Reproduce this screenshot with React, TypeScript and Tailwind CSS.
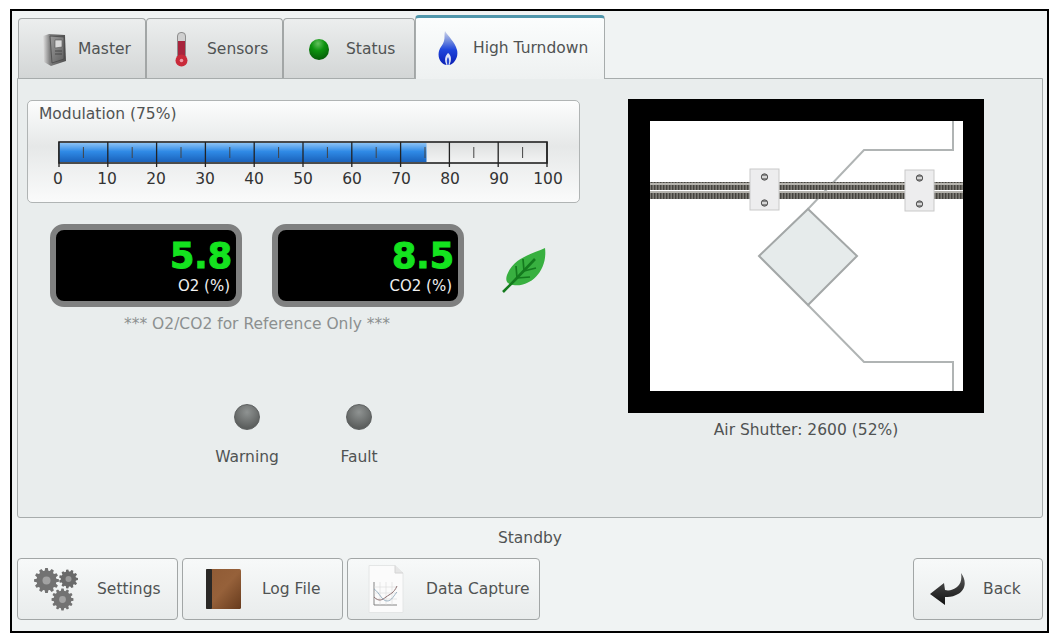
import type { ReactNode } from "react";

// Gear outline, built from centre, radius and tooth count
const gearPath = (cx: number, cy: number, r: number, teeth: number) => {
  const pts: string[] = [];
  const step = (Math.PI * 2) / teeth;
  for (let i = 0; i < teeth; i++) {
    const a = i * step;
    const add = (rad: number, ang: number) =>
      pts.push(`${(cx + rad * Math.cos(ang)).toFixed(2)} ${(cy + rad * Math.sin(ang)).toFixed(2)}`);
    add(r * 0.8, a - step * 0.36);
    add(r, a - step * 0.2);
    add(r, a + step * 0.2);
    add(r * 0.8, a + step * 0.36);
  }
  return `M${pts.join("L")}Z`;
};

const MasterIcon = () => (
  <svg width="24" height="33" viewBox="0 0 24 33">
    <defs>
      <linearGradient id="cab" x1="0" x2="1" y1="0" y2="0">
        <stop offset="0" stopColor="#e2e2e2" />
        <stop offset="0.3" stopColor="#7f7f7f" />
        <stop offset="1" stopColor="#4f4f4f" />
      </linearGradient>
      <linearGradient id="cabFront" x1="0" x2="1" y1="0" y2="1">
        <stop offset="0" stopColor="#9b9b9b" />
        <stop offset="1" stopColor="#5f5f5f" />
      </linearGradient>
    </defs>
    <path d="M1 3 L7 1 L23 2 L24 28 L9 33 L2 29 Z" fill="url(#cab)" />
    <path d="M8 3 L22 4 L22 26 L10 30 Z" fill="url(#cabFront)" stroke="#4a4a4a" strokeWidth="0.8" />
    <path d="M13 7 L20 7 L20 14 L13 15 Z" fill="#d9d9d9" stroke="#555" strokeWidth="0.6" />
    <path d="M13 18 L20 18 M13 21 L20 21" stroke="#444" strokeWidth="0.9" />
  </svg>
);

const ThermometerIcon = () => (
  <svg width="13" height="35" viewBox="0 0 13 35">
    <rect x="2.5" y="0.5" width="8" height="28" rx="3.5" fill="#cfcfcf" stroke="#8d8d8d" />
    <rect x="3" y="9" width="7" height="20" fill="#a8243c" />
    <circle cx="6.5" cy="28.5" r="6" fill="#c92a3a" />
    <circle cx="6.5" cy="28.5" r="1.8" fill="#ee9aa5" />
  </svg>
);

const StatusBall = () => (
  <svg width="20" height="21" viewBox="0 0 20 21">
    <defs>
      <radialGradient id="ball" cx="0.45" cy="0.22" r="0.85">
        <stop offset="0" stopColor="#62c05c" />
        <stop offset="0.4" stopColor="#0d930f" />
        <stop offset="1" stopColor="#045407" />
      </radialGradient>
    </defs>
    <ellipse cx="10" cy="10.5" rx="10" ry="10.5" fill="url(#ball)" />
  </svg>
);

const FlameIcon = () => (
  <svg width="20" height="35" viewBox="0 0 20 35">
    <defs>
      <linearGradient id="flame" x1="0" x2="0" y1="0" y2="1">
        <stop offset="0" stopColor="#cfd5ea" />
        <stop offset="0.3" stopColor="#6e88dd" />
        <stop offset="0.55" stopColor="#1f46dc" />
        <stop offset="1" stopColor="#0a1fb4" />
      </linearGradient>
    </defs>
    <path d="M7 0 C10 5 17 11 19 19 C21 27 15 34 11 34 L9 34 C4 34 -1 28 1 20 C2 16 5 14 6 10 C7 7 6 3 7 0 Z" fill="url(#flame)" />
    <path d="M10 22 C13 24 14 28 11.5 34 L8.5 34 C6 29 7 25 10 22 Z" fill="#dfe5f7" />
    <path d="M10 26 C11.5 28 11.5 31 10.5 34 L9.5 34 C8.5 31 8.5 28 10 26 Z" fill="#2a4bd6" />
  </svg>
);

const GearsIcon = () => (
  <svg width="44" height="44" viewBox="0 0 44 44">
    <path d={gearPath(12.5, 13.5, 12.5, 12)} fill="#727272" />
    <circle cx="12.5" cy="13.5" r="4" fill="#a2a2a2" />
    <path d={gearPath(34.5, 12, 9.5, 11)} fill="#6a6a6a" />
    <circle cx="34.5" cy="12" r="3" fill="#9a9a9a" />
    <path d={gearPath(28.5, 32.5, 11, 12)} fill="#727272" />
    <circle cx="28.5" cy="32.5" r="3.4" fill="#a2a2a2" />
  </svg>
);

const BookIcon = () => (
  <svg width="35" height="40" viewBox="0 0 35 40">
    <defs>
      <linearGradient id="book" x1="0" x2="1" y1="0" y2="1">
        <stop offset="0" stopColor="#8f5a34" />
        <stop offset="0.5" stopColor="#96613a" />
        <stop offset="1" stopColor="#673b1d" />
      </linearGradient>
    </defs>
    <rect x="0" y="0" width="35" height="40" rx="1.5" fill="url(#book)" />
    <rect x="0" y="0" width="6" height="40" rx="1" fill="#2a2826" />
  </svg>
);

const CaptureIcon = () => (
  <svg width="36" height="48" viewBox="0 0 36 48">
    <path d="M1 0.5 L27 0.5 L35 8 L35 47.5 L1 47.5 Z" fill="#fbfbfb" stroke="#e4e6e6" />
    <path d="M27 0.5 L27 8 L35 8" fill="#e6e6e6" stroke="#d4d4d4" />
    <path d="M6 17 L6 40 L29 40" fill="none" stroke="#777" strokeWidth="0.9" />
    <path d="M6 22 L29 22 M6 28 L29 28 M6 34 L29 34 M12 17 L12 40 M18 17 L18 40 M24 17 L24 40" stroke="#dadada" strokeWidth="0.6" />
    <path d="M6 32 C11 37 14 35 18 32 C22 29 26 28 29 21" fill="none" stroke="#8d6f70" strokeWidth="1" />
    <path d="M6 24 C11 27 14 36 19 36 C24 36 26 30 29 27" fill="none" stroke="#86a2b6" strokeWidth="0.8" />
  </svg>
);

const BackIcon = () => (
  <svg width="36" height="32" viewBox="0 0 36 32">
    <defs>
      <linearGradient id="back" x1="0" x2="0" y1="0" y2="1">
        <stop offset="0" stopColor="#5a5a5a" />
        <stop offset="1" stopColor="#111" />
      </linearGradient>
    </defs>
    <path d="M31 0 C37 8 36 18 26 22 C22 24 18 24 15 24 L15 32 L0 21 L14 10 L15 17 C19 18 23 17 27 14 C31 11 32 6 31 0 Z" fill="url(#back)" />
  </svg>
);

const LeafIcon = () => (
  <svg width="45" height="45" viewBox="0 0 45 45">
    <path d="M43 0 C30 6 11 10 5 27 C3 33 5 36 11 37 C27 40 46 24 43 0 Z" fill="#38b040" />
    <path d="M1 44 L13 32 L33 11" fill="none" stroke="#147a1e" strokeWidth="2.6" />
    <path d="M15 30 L14 18 M22 23 L21 11 M15 30 L28 29 M22 23 L34 20" fill="none" stroke="#147a1e" strokeWidth="1.7" />
  </svg>
);

const Tab = ({ label, icon, width, pad, gap, active }: { label: string; icon: ReactNode; width: string; pad: string; gap: string; active?: boolean }) => (
  <div
    className={
      active
        ? `relative z-10 -mb-px flex h-[64px] items-center rounded-t-[4px] border-x border-b-0 border-t-[3px] border-x-[#a7acac] border-t-[#4f96ab] bg-gradient-to-b from-[#fbfdfd] to-[#eef1f1] pb-[1px] ${width} ${pad} ${gap}`
        : `flex h-[60px] items-center rounded-t-[4px] border border-b-0 border-[#a2a6a6] bg-gradient-to-b from-[#eceeee] to-[#d3d6d6] pt-px ${width} ${pad} ${gap}`
    }
  >
    {icon}
    <span className="pt-[2px]">{label}</span>
  </div>
);

const ActionButton = ({ label, icon, width, pad, gap }: { label: string; icon: ReactNode; width: string; pad: string; gap: string }) => (
  <div className={`flex h-[62px] items-center rounded-[4px] border border-[#a2a6a6] bg-gradient-to-b from-[#f7f9f9] to-[#e9ecec] ${width} ${pad} ${gap}`}>
    {icon}
    <span className="pt-[2px]">{label}</span>
  </div>
);

const Readout = ({ value, unit }: { value: string; unit: string }) => (
  <div className="flex h-[83px] w-[192px] flex-col items-end rounded-[14px] border-[6px] border-[#7f8080] bg-black pr-[4px] leading-none">
    <span className="mt-[5px] text-[35px] font-bold leading-[42px] text-[#14e31f] [-webkit-text-stroke:1px_#14e31f]">{value}</span>
    <span className="pr-[2px] text-[15px] leading-[18px] text-[#f0f0f0]">{unit}</span>
  </div>
);

const Led = ({ label, width }: { label: string; width: string }) => (
  <div className={`flex flex-col items-center ${width}`}>
    <div className="h-[26px] w-[26px] rounded-full border border-[#5c5f5f] bg-[radial-gradient(circle_at_50%_30%,#8f9392,#5c5f5e_75%)]" />
    <span className="mt-[16px] leading-[22px]">{label}</span>
  </div>
);

const ModulationBar = () => (
  <svg width="492" height="30" viewBox="0 0 492 30" className="block">
    <defs>
      <linearGradient id="fill" x1="0" x2="0" y1="0" y2="1">
        <stop offset="0" stopColor="#8cc2f4" />
        <stop offset="0.45" stopColor="#2f8ae6" />
        <stop offset="1" stopColor="#1a62bb" />
      </linearGradient>
      <linearGradient id="track" x1="0" x2="0" y1="0" y2="1">
        <stop offset="0" stopColor="#dcdede" />
        <stop offset="1" stopColor="#f3f4f4" />
      </linearGradient>
    </defs>
    <rect x="1" y="1" width="488" height="21" fill="url(#track)" stroke="#222" strokeWidth="1.6" />
    <rect x="1.5" y="2" width="367" height="19" fill="url(#fill)" />
    {[0, 10, 20, 30, 40, 50, 60, 70, 80, 90, 100].map((t) => (
      <line key={t} x1={1 + t * 4.88} x2={1 + t * 4.88} y1="1" y2="26" stroke="#222" strokeWidth="1.3" />
    ))}
    {[5, 15, 25, 35, 45, 55, 65, 75, 85, 95].map((t) => (
      <line key={t} x1={1 + t * 4.88} x2={1 + t * 4.88} y1="6" y2="17" stroke="#444" strokeWidth="1" />
    ))}
  </svg>
);

const Bracket = ({ x, y }: { x: number; y: number }) => (
  <g>
    <rect x={x} y={y} width="29" height="41" fill="#ededee" stroke="#c9c9c9" />
    <circle cx={x + 14.5} cy={y + 8} r="3.2" fill="#8a8a8a" stroke="#555" />
    <circle cx={x + 14.5} cy={y + 34} r="3.2" fill="#8a8a8a" stroke="#555" />
    <rect x={x + 12} y={y + 7.2} width="5" height="1.6" fill="#e8e8e8" />
    <rect x={x + 12} y={y + 33.2} width="5" height="1.6" fill="#e8e8e8" />
  </g>
);

// Damper drawing, coordinates follow the screenshot
const ShutterDiagram = () => (
  <svg width="313" height="270" viewBox="650 121 313 270" className="block bg-white">
    <defs>
      <pattern id="thread" width="3" height="8" patternUnits="userSpaceOnUse">
        <rect width="3" height="8" fill="#7d7b75" />
        <rect width="1.4" height="8" fill="#45433e" />
        <rect y="0" width="3" height="1" fill="#b5b3ad" />
        <rect y="7" width="3" height="1" fill="#b5b3ad" />
      </pattern>
    </defs>
    <path d="M953 121 L953 150 L864 150 L808 209" fill="none" stroke="#b0b4b4" strokeWidth="2" />
    <path d="M808 305 L864 362 L953 362 L953 391" fill="none" stroke="#b0b4b4" strokeWidth="2" />
    <rect x="650" y="182" width="313" height="8" fill="url(#thread)" />
    <rect x="650" y="191" width="313" height="8" fill="url(#thread)" />
    <path d="M808 209 L857 256 L808 305 L759 256 Z" fill="#e6ebeb" stroke="#a3a7a7" strokeWidth="2" />
    <Bracket x={750} y={169} />
    <Bracket x={905} y={170} />
  </svg>
);

export default function App() {
  return (
    <div className="h-[642px] w-[1058px] overflow-hidden bg-white pl-[10px] pt-[9px] font-['DejaVu_Sans',sans-serif] text-[15.5px] text-[#505353]">
      <div className="h-[624px] w-[1039px] border-2 border-black bg-[#f0f3f3] pl-[5px] pr-[4px] pt-[4px]">
        <div className="ml-px flex h-[63px] items-end">
          <Tab label="Master" icon={<MasterIcon />} width="w-[128px]" pad="pl-[23px]" gap="gap-[12px]" />
          <Tab label="Sensors" icon={<ThermometerIcon />} width="w-[137px]" pad="pl-[28px]" gap="gap-[19px]" />
          <Tab label="Status" icon={<StatusBall />} width="w-[132px]" pad="pl-[25px]" gap="gap-[17px]" />
          <Tab label="High Turndown" icon={<FlameIcon />} width="w-[190px]" pad="pl-[22px]" gap="gap-[15px]" active />
        </div>

        <div className="flex h-[440px] gap-[48px] rounded-b-[3px] border border-[#a7acac] bg-[#e9eded] pl-[9px] pt-[20px]">
          <div className="w-[553px] pt-px">
            <div className="h-[103px] rounded-[5px] border border-[#b0b4b4] bg-[linear-gradient(#fcfdfd,#e6e8e8_45%,#fafbfb)] pl-[30px] pt-[2px]">
              <div className="-ml-[19px] leading-[22px]">Modulation (75%)</div>
              <div className="mt-[16px]">
                <ModulationBar />
              </div>
              <div className="-mt-px flex w-[490px] justify-between text-[#333]">
                {[0, 10, 20, 30, 40, 50, 60, 70, 80, 90, 100].map((n) => (
                  <span key={n} className="flex w-0 justify-center leading-[18px]">
                    {n}
                  </span>
                ))}
              </div>
            </div>

            <div className="ml-[23px] mt-[21px] flex items-center">
              <Readout value="5.8" unit="O2 (%)" />
              <div className="ml-[30px]">
                <Readout value="8.5" unit="CO2 (%)" />
              </div>
              <div className="ml-[38px] mt-[9px]">
                <LeafIcon />
              </div>
            </div>

            <div className="mt-[6px] w-[460px] text-center leading-[22px] text-[#8c9090]">*** O2/CO2 for Reference Only ***</div>

            <div className="ml-[180px] mt-[69px] flex gap-[32px]">
              <Led label="Warning" width="w-[80px]" />
              <Led label="Fault" width="w-[80px]" />
            </div>
          </div>

          <div className="w-[356px]">
            <div className="h-[314px] w-[356px] bg-black pl-[22px] pt-[22px]">
              <ShutterDiagram />
            </div>
            <div className="mt-[6px] text-center leading-[22px]">Air Shutter: 2600 (52%)</div>
          </div>
        </div>

        <div className="h-[40px] pt-[9px] text-center leading-[22px]">
          <span>Standby</span>
        </div>

        <div className="flex">
          <div className="flex gap-[4px]">
            <ActionButton label="Settings" icon={<GearsIcon />} width="w-[161px]" pad="pl-[16px]" gap="gap-[19px]" />
            <ActionButton label="Log File" icon={<BookIcon />} width="w-[161px]" pad="pl-[23px]" gap="gap-[21px]" />
            <ActionButton label="Data Capture" icon={<CaptureIcon />} width="w-[193px]" pad="pl-[20px]" gap="gap-[22px]" />
          </div>
          <div className="ml-auto">
            <ActionButton label="Back" icon={<BackIcon />} width="w-[130px]" pad="pl-[16px]" gap="gap-[17px]" />
          </div>
        </div>
      </div>
    </div>
  );
}
